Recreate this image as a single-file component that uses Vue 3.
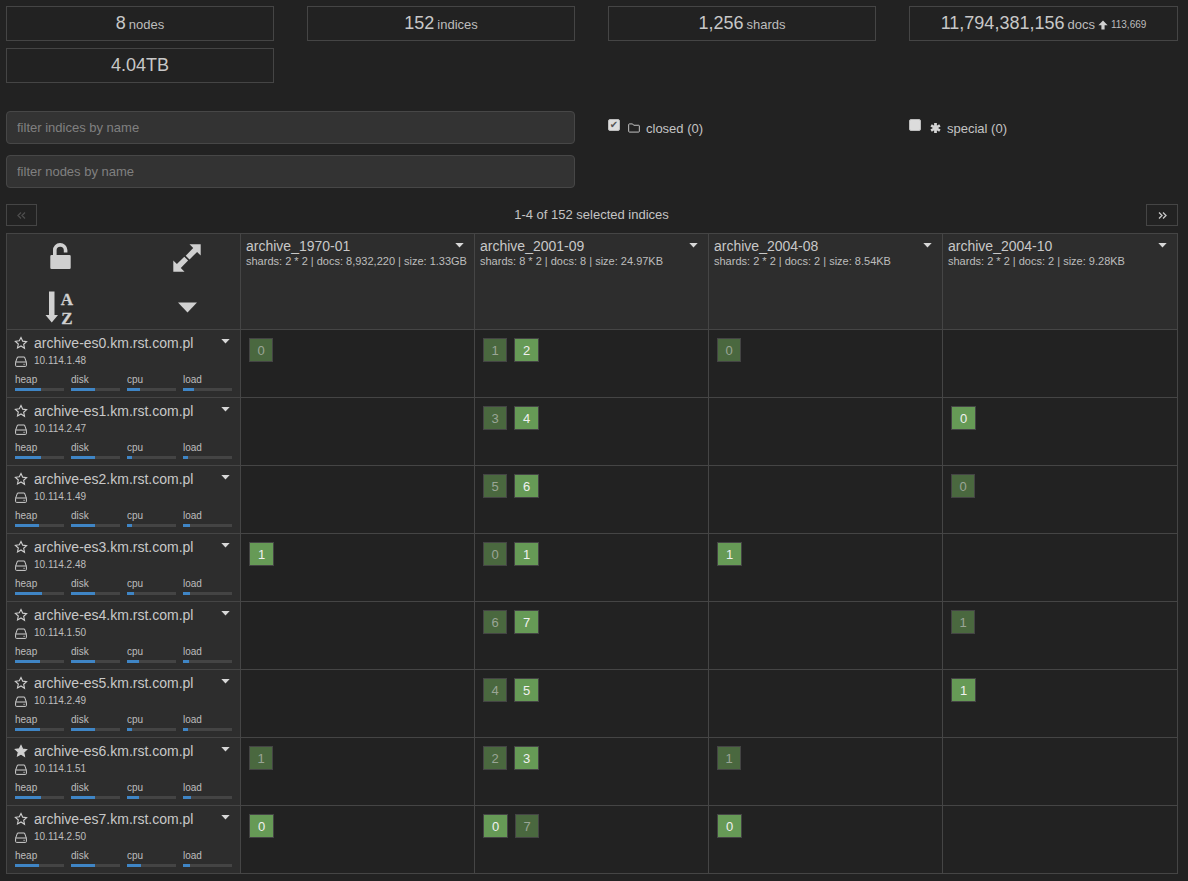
<script setup>
const stats = [
  { big: '8', small: 'nodes' },
  { big: '152', small: 'indices' },
  { big: '1,256', small: 'shards' },
  { big: '11,794,381,156', small: 'docs', extra: '113,669' },
  { big: '4.04TB', small: '' }
]
const indices = [
  { name: 'archive_1970-01', info: 'shards: 2 * 2 | docs: 8,932,220 | size: 1.33GB' },
  { name: 'archive_2001-09', info: 'shards: 8 * 2 | docs: 8 | size: 24.97KB' },
  { name: 'archive_2004-08', info: 'shards: 2 * 2 | docs: 2 | size: 8.54KB' },
  { name: 'archive_2004-10', info: 'shards: 2 * 2 | docs: 2 | size: 9.28KB' }
]
const R = (n) => ({ n, p: false })
const P = (n) => ({ n, p: true })
const nodes = [
  { name: 'archive-es0.km.rst.com.pl', ip: '10.114.1.48', bars: [53, 49, 27, 22], cells: [[R(0)], [R(1), P(2)], [R(0)], []] },
  { name: 'archive-es1.km.rst.com.pl', ip: '10.114.2.47', bars: [53, 49, 10, 10], cells: [[], [R(3), P(4)], [], [P(0)]] },
  { name: 'archive-es2.km.rst.com.pl', ip: '10.114.1.49', bars: [49, 49, 10, 14], cells: [[], [R(5), P(6)], [], [R(0)]] },
  { name: 'archive-es3.km.rst.com.pl', ip: '10.114.2.48', bars: [55, 49, 14, 14], cells: [[P(1)], [R(0), P(1)], [P(1)], []] },
  { name: 'archive-es4.km.rst.com.pl', ip: '10.114.1.50', bars: [51, 49, 25, 12], cells: [[], [R(6), P(7)], [], [R(1)]] },
  { name: 'archive-es5.km.rst.com.pl', ip: '10.114.2.49', bars: [51, 49, 10, 10], cells: [[], [R(4), P(5)], [], [P(1)]] },
  { name: 'archive-es6.km.rst.com.pl', ip: '10.114.1.51', bars: [53, 49, 25, 16], cells: [[R(1)], [R(2), P(3)], [R(1)], []], master: true },
  { name: 'archive-es7.km.rst.com.pl', ip: '10.114.2.50', bars: [49, 49, 29, 14], cells: [[P(0)], [P(0), R(7)], [P(0)], []] }
]
const labels = ['heap', 'disk', 'cpu', 'load']
const starPath = 'M12 2.6l2.9 6.2 6.7.8-5 4.6 1.4 6.7L12 17l-6 3.4 1.4-6.7-5-4.6 6.7-.8z'
</script>

<template>
  <div class="page">
    <section class="stats">
      <div v-for="s in stats" :key="s.big" class="stat">
        <span class="big">{{ s.big }}</span>
        <span v-if="s.small" class="small">{{ s.small }}</span>
        <template v-if="s.extra">
          <svg class="up" viewBox="0 0 10 10"><path d="M5 .5L9.600 5.200H6.600V9.500H3.400V5.200H.4z" /></svg>
          <span class="extra">{{ s.extra }}</span>
        </template>
      </div>
    </section>

    <section class="filters">
      <div class="inputs">
        <input class="filter" placeholder="filter indices by name" />
        <input class="filter" placeholder="filter nodes by name" />
      </div>
      <label class="check">
        <input type="checkbox" checked />
        <svg class="folder" viewBox="0 0 14 12"><path d="M1.500 10.900h11a.9.9 0 0 0 .9-.9V3.600a.9.9 0 0 0-.9-.9H6.600L5.300 1.100H1.500a.9.9 0 0 0-.9.9v8a.9.9 0 0 0 .9.9z" /></svg>
        <span>closed (0)</span>
      </label>
      <label class="check">
        <input type="checkbox" />
        <svg class="asterisk" viewBox="0 0 12 12"><path d="M6 .5v11M1.200 3.200l9.600 5.600M1.200 8.800l9.600-5.600" /></svg>
        <span>special (0)</span>
      </label>
    </section>

    <section class="pager">
      <button class="page-btn dim"><svg viewBox="0 0 9 7"><path d="M4 .5L1 3.500l3 3M8 .5L5 3.500l3 3" /></svg></button>
      <span class="page-text">1-4 of 152 selected indices</span>
      <button class="page-btn wide"><svg viewBox="0 0 9 7"><path d="M1 .5l3 3-3 3M5 .5l3 3-3 3" /></svg></button>
    </section>

    <section class="table">
      <div class="cell head corner">
        <svg class="tool lock" viewBox="0 0 21 27"><path d="M1.500 12h18a1.200 1.200 0 0 1 1.200 1.200v11.600a1.200 1.200 0 0 1-1.200 1.200h-18A1.200 1.200 0 0 1 .3 24.800V13.200A1.200 1.200 0 0 1 1.500 12zM3 12V7.500a7.200 7.200 0 0 1 14.400-.500V9.500h-3.600V7.300a3.600 3.600 0 0 0-7.200.2V12z" /></svg>
        <svg class="tool expand" viewBox="0 0 28 28"><path d="M27.700.300V11.500l-3.600-3.600-7.600 7.600-3.800-3.800 7.500-7.700L16.500.300zM.3 27.700V16.500l3.600 3.600 7.400-7.300 3.800 3.800-7.300 7.400 3.700 3.700z" /></svg>
        <svg class="tool sort" viewBox="0 -2 30 37"><path d="M4 .5h5.500V24H13L6.750 31.500.5 24H4z" /><text x="22" y="13.700" class="az">A</text><text x="22" y="32.500" class="az">Z</text></svg>
        <svg class="tool caret-big" viewBox="0 0 20 11"><path d="M0 .2h20L10 10.800z" /></svg>
      </div>
      <div v-for="ix in indices" :key="ix.name" class="cell head index">
        <div class="index-top">
          <span class="index-name">{{ ix.name }}</span>
          <svg class="caret" viewBox="0 0 10 6"><path d="M0 0h10L5 5.500z" /></svg>
        </div>
        <div class="index-info">{{ ix.info }}</div>
      </div>

      <template v-for="node in nodes" :key="node.name">
        <div class="cell head node">
          <div class="node-top">
            <svg class="star" :class="{ solid: node.master }" viewBox="0 0 24 24"><path :d="starPath" /></svg>
            <span class="node-name">{{ node.name }}</span>
            <svg class="caret" viewBox="0 0 10 6"><path d="M0 0h10L5 5.500z" /></svg>
          </div>
          <div class="node-ip">
            <svg class="hdd" viewBox="0 0 12 11"><path d="M.6 6.200L2.500 1h7l1.900 5.200V9.500a.9.900 0 0 1-.9.900h-9a.9.900 0 0 1-.9-.9zM.8 6h10.400" /><path d="M8.500 8.300h1.200" /></svg>
            <span>{{ node.ip }}</span>
          </div>
          <div class="bars">
            <div v-for="(l, i) in labels" :key="l" class="metric">
              <span class="metric-label">{{ l }}</span>
              <div class="track"><div class="fill" :style="{ width: node.bars[i] + '%' }"></div></div>
            </div>
          </div>
        </div>
        <div v-for="(c, i) in node.cells" :key="i" class="cell shards">
          <div v-for="(s, j) in c" :key="j" class="shard" :class="s.p ? 'primary' : 'replica'">{{ s.n }}</div>
        </div>
      </template>
    </section>
  </div>
</template>

<style>
html, body { background: #222222; }
</style>

<style scoped>
.page {
  width: 1172px;
  padding: 6px 10px 8px 6px;
  font-family: "Liberation Sans", Arial, sans-serif;
  color: #c8c8c8;
  font-size: 13px;
}
.stats {
  display: grid;
  grid-template-columns: 268px 268px 268px 269px;
  column-gap: 33px;
  row-gap: 7px;
}
.stat {
  height: 35px;
  box-sizing: border-box;
  border: 1px solid #454545;
  display: flex;
  align-items: center;
  justify-content: center;
  gap: 3px;
  white-space: nowrap;
}
.big { font-size: 18px; color: #c8c8c8; }
.small { font-size: 13px; margin-top: 2px; color: #bdbdbd; }
.up { width: 10px; height: 10px; fill: #d0d0d0; margin-top: 3px; }
.extra { font-size: 10px; margin-top: 2px; color: #bdbdbd; }
.filters {
  margin-top: 28px;
  display: grid;
  grid-template-columns: 569px 268px 269px;
  column-gap: 33px;
  align-items: start;
}
.inputs { display: flex; flex-direction: column; gap: 11px; }
.filter {
  box-sizing: border-box;
  width: 100%;
  height: 33px;
  background: #333333;
  border: 1px solid #474747;
  border-radius: 4px;
  padding: 0 10px;
  font: 13px "Liberation Sans", Arial, sans-serif;
  color: #ccc;
  outline: none;
}
.filter::placeholder { color: #808080; opacity: 1; }
.check {
  display: flex;
  align-items: center;
  margin-top: 8px;
  height: 18px;
  font-size: 13px;
  color: #c4c4c4;
}
.check input {
  appearance: none;
  box-sizing: border-box;
  margin: -6px 8px 0 0;
  width: 12px;
  height: 12px;
  border-radius: 2px;
  background: #dcdcdc;
  border: 1px solid #bcbcbc;
  position: relative;
  flex: none;
}
.check input:checked::after {
  content: "✔";
  position: absolute;
  left: 0;
  top: -1px;
  width: 10px;
  font: 10px/12px "DejaVu Sans", sans-serif;
  text-align: center;
  color: #555555;
}
.folder { width: 12px; height: 10px; fill: none; stroke: #d0d0d0; stroke-width: 1.100; margin-right: 6px; flex: none; }
.asterisk { width: 11px; height: 12px; fill: none; stroke: #d4d4d4; stroke-width: 3; margin: 0 6px 0 1px; flex: none; }
.pager {
  margin-top: 16px;
  display: flex;
  align-items: center;
  justify-content: space-between;
  height: 22px;
}
.page-btn {
  box-sizing: border-box;
  width: 31px;
  height: 22px;
  padding: 0;
  background: transparent;
  border: 1px solid #454545;
  display: flex;
  align-items: center;
  justify-content: center;
}
.page-btn.wide { width: 32px; }
.page-btn svg { width: 9px; height: 7px; fill: none; stroke: #c8c8c8; stroke-width: 1.300; }
.page-btn.dim svg { stroke: #4d4d4d; }
.page-text { font-size: 13px; color: #c4c4c4; padding-bottom: 2px; }
.table {
  margin-top: 7px;
  width: 1172px;
  box-sizing: border-box;
  display: grid;
  grid-template-columns: 234px 234px 234px 234px 235px;
  grid-template-rows: 96px repeat(8, 68px);
  border-top: 1px solid #454545;
  border-left: 1px solid #454545;
}
.cell {
  box-sizing: border-box;
  border-right: 1px solid #454545;
  border-bottom: 1px solid #454545;
  min-width: 0;
}
.head { background: #2d2d2d; }
.corner {
  display: grid;
  grid-template-columns: 1fr 1fr;
  grid-template-rows: 47px 48px;
  place-items: center;
}
.tool { fill: #d0d0d0; }
.lock { width: 21px; height: 27px; margin: 0 10px 2px 0; }
.expand { width: 28px; height: 28px; margin: 1px 0 0 11px; }
.sort { width: 30px; height: 37px; margin: 5px 10px 0 0; }
.caret-big { width: 19px; height: 11px; margin: 4px 0 0 11px; }
.az { font: bold 17px "Liberation Serif", serif; fill: #d0d0d0; stroke: #d0d0d0; stroke-width: .3; text-anchor: middle; }
.index { padding: 4px 5px; }
.index-top { display: flex; justify-content: space-between; align-items: flex-start; }
.index-name { font-size: 14px; line-height: 16px; color: #c8c8c8; }
.index-info { font-size: 11px; line-height: 13px; margin-top: 1px; color: #bdbdbd; white-space: nowrap; }
.caret { width: 9px; height: 5px; fill: #d8d8d8; margin: 5px 5px 0 0; flex: none; }
.node { padding: 4px 8px 0 8px; }
.node-top { display: flex; align-items: center; height: 18px; }
.star { width: 14px; height: 14px; fill: none; stroke: #d0d0d0; stroke-width: 1.900; margin: 0 6px 0 -1px; flex: none; overflow: visible; }
.star.solid { fill: #d0d0d0; }
.node-name { font-size: 14px; color: #c8c8c8; flex: 1; }
.node-top .caret { margin: -3px 2px 0 0; }
.node-ip { display: flex; align-items: center; height: 14px; margin-top: 1px; font-size: 10px; color: #bdbdbd; }
.hdd { width: 12px; height: 11px; fill: none; stroke: #d0d0d0; stroke-width: 1; margin-right: 7px; margin-top: 2px; flex: none; }
.bars { display: grid; grid-template-columns: repeat(4, 49px); column-gap: 7px; margin-top: 7px; }
.metric { display: flex; flex-direction: column; }
.metric-label { font-size: 10px; line-height: 12px; color: #bdbdbd; }
.track { height: 3px; background: #444444; margin-top: 2px; }
.fill { height: 100%; background: #3f85c5; }
.shards { display: flex; align-items: flex-start; gap: 7px; padding: 8px; background: #222222; }
.shard {
  box-sizing: border-box;
  width: 24px;
  height: 24px;
  border: 1px solid #444444;
  display: flex;
  align-items: center;
  justify-content: center;
  font-size: 13px;
}
.primary { background: #669a56; color: #f0f0f0; width: 25px; }
.replica { background: #4a683f; color: #9aa596; }
</style>
